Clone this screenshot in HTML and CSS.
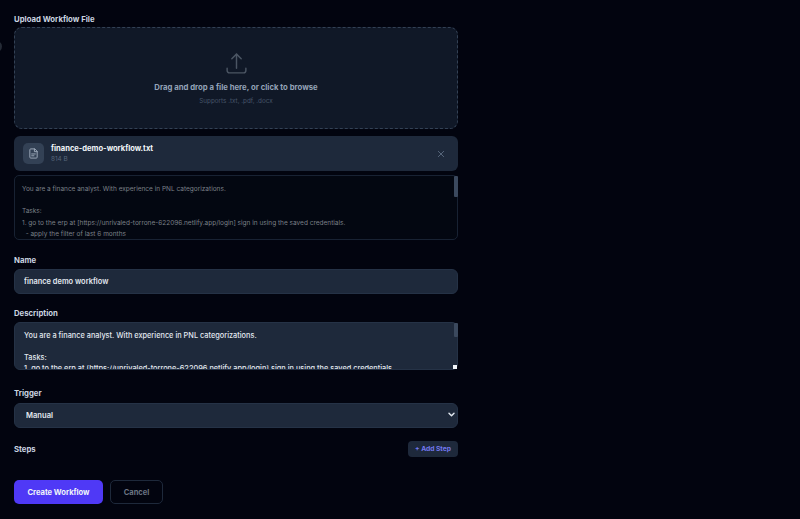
FILE: index.html
```html
<!DOCTYPE html>
<html lang="en">
<head>
<meta charset="utf-8">
<title>Create Workflow</title>
<link rel="stylesheet" href="styles.css">
</head>
<body>
<span class="edge-dot"></span>
<form class="form">
  <label class="label label-upload">Upload Workflow File</label>
  <div class="dropzone">
    <svg class="upload-icon" viewBox="0 0 24 24" fill="none" stroke="currentColor" stroke-width="1.4" stroke-linecap="round" stroke-linejoin="round"><path d="M3 16.5v2.25A2.25 2.25 0 0 0 5.25 21h13.5A2.25 2.25 0 0 0 21 18.75V16.5"/><path d="M7.5 7.5 12 3l4.5 4.5"/><path d="M12 3v13.5"/></svg>
    <div class="drop-title">Drag and drop a file here, or click to browse</div>
    <div class="drop-sub">Supports .txt, .pdf, .docx</div>
  </div>
  <div class="file-card">
    <div class="file-icon">
      <svg viewBox="0 0 24 24" fill="none" stroke="currentColor" stroke-width="2" stroke-linecap="round" stroke-linejoin="round"><path d="M14 2H6a2 2 0 0 0-2 2v16a2 2 0 0 0 2 2h12a2 2 0 0 0 2-2V8z"/><path d="M14 2v6h6"/><path d="M8 13h8"/><path d="M8 17h5"/></svg>
    </div>
    <div class="file-info">
      <div class="file-name">finance-demo-workflow.txt</div>
      <div class="file-size">814 B</div>
    </div>
    <svg class="file-close" viewBox="0 0 12 12" fill="none" stroke="currentColor" stroke-width="1.5" stroke-linecap="round"><path d="M2 2l8 8M10 2l-8 8"/></svg>
  </div>
  <div class="scroll-wrap">
    <div class="preview">You are a finance analyst. With experience in PNL categorizations.

Tasks:
1. go to the erp at [https://unrivaled-torrone-622096.netlify.app/login] sign in using the saved credentials.
  - apply the filter of last 6 months</div>
    <span class="thumb thumb-preview"></span>
  </div>

  <label class="label label-name">Name</label>
  <input class="input" type="text" value="finance demo workflow">

  <label class="label label-desc">Description</label>
  <div class="scroll-wrap">
    <textarea class="textarea">You are a finance analyst. With experience in PNL categorizations.

Tasks:
1. go to the erp at [https://unrivaled-torrone-622096.netlify.app/login] sign in using the saved credentials.</textarea>
    <span class="thumb thumb-desc"></span>
    <span class="resize-corner"></span>
  </div>

  <label class="label label-trigger">Trigger</label>
  <div class="select-wrap">
    <select class="select"><option>Manual</option></select>
    <svg class="select-chevron" viewBox="0 0 8 6" fill="none" stroke="currentColor" stroke-width="1.7" stroke-linecap="round" stroke-linejoin="round"><path d="M1 1.5 4 4.5 7 1.5"/></svg>
  </div>

  <div class="steps-row">
    <span class="label steps-label">Steps</span>
    <button type="button" class="add-step">+ Add Step</button>
  </div>

  <div class="actions">
    <button type="button" class="btn-primary">Create Workflow</button>
    <button type="button" class="btn-cancel">Cancel</button>
  </div>
</form>
</body>
</html>
```
FILE: styles.css
```css
* { box-sizing: border-box; }
html, body { margin: 0; height: 100%; overflow: hidden; }
body {
  background: #02040f;
  font-family: Inter, "Liberation Sans", sans-serif;
  color: #e2e8f0;
  position: relative;
}
.edge-dot {
  position: absolute;
  left: -9px;
  top: 41px;
  width: 11px;
  height: 11px;
  border-radius: 50%;
  background: #252b36;
}
.form {
  width: 444px;
  margin-left: 14px;
  padding-top: 14px;
  display: flex;
  flex-direction: column;
}
.label {
  display: block;
  font-size: 7.75px;
  line-height: 10px;
  font-weight: 700;
  color: #cbd5e1;
}
.label-upload { margin-bottom: 3px; }
.dropzone {
  height: 102px;
  border: 1px dashed #334155;
  border-radius: 8px;
  background: #101827;
  display: flex;
  flex-direction: column;
  align-items: center;
  padding-top: 23px;
}
.upload-icon { width: 25px; height: 25px; color: #4b5563; flex: none; }
.drop-title {
  margin-top: 6px;
  font-size: 7.75px;
  line-height: 11px;
  font-weight: 700;
  color: #94a3b8;
}
.drop-sub {
  margin-top: 3px;
  font-size: 6.3px;
  line-height: 10px;
  color: #475569;
}
.file-card {
  margin-top: 7px;
  height: 35px;
  border-radius: 6px;
  background: #1e293b;
  display: flex;
  align-items: center;
  padding: 0 13px 0 9px;
}
.file-icon {
  width: 21px;
  height: 21px;
  border-radius: 5px;
  background: #334155;
  color: #a3afbf;
  display: flex;
  align-items: center;
  justify-content: center;
  flex: none;
}
.file-icon svg { width: 11px; height: 11px; }
.file-info { margin-left: 7px; flex: 1; }
.file-name {
  font-size: 7.55px;
  line-height: 11px;
  font-weight: 700;
  color: #f1f5f9;
}
.file-size {
  margin-top: 1px;
  font-size: 6.4px;
  line-height: 9px;
  color: #56657a;
}
.file-close { width: 8px; height: 8px; color: #56657a; flex: none; }
.scroll-wrap { position: relative; }
.file-card + .scroll-wrap { margin-top: 4px; }
.preview {
  height: 65px;
  border: 1px solid #182233;
  border-radius: 5px;
  background: #030711;
  padding: 8px 7px 0;
  font-size: 6.5px;
  line-height: 11.2px;
  color: #7b8088;
  white-space: pre-wrap;
  overflow: hidden;
}
.thumb {
  position: absolute;
  right: 0;
  top: 1px;
  width: 4px;
  background: #3b495e;
  border-radius: 1px;
}
.thumb-preview { height: 21px; }
.thumb-desc { height: 14px; }
.resize-corner {
  position: absolute;
  right: 1px;
  bottom: 1px;
  width: 4px;
  height: 4px;
  background: #f1f5f9;
}
.label-name { margin-top: 15px; margin-bottom: 4px; }
.input {
  height: 25px;
  border: 1px solid #253246;
  border-radius: 6px;
  background: #1e293b;
  padding: 0 9px;
  font: 600 7.45px Inter, "Liberation Sans", sans-serif;
  color: #e2e8f0;
  outline: none;
}
.label-desc { margin-top: 14px; margin-bottom: 4px; }
.textarea {
  display: block;
  width: 100%;
  height: 48px;
  border: 1px solid #253246;
  border-radius: 6px;
  background: #1e293b;
  padding: 6.5px 9px 0;
  font: 500 7.35px/11.3px Inter, "Liberation Sans", sans-serif;
  color: #e2e8f0;
  outline: none;
  resize: none;
  overflow: hidden;
}
.label-trigger { margin-top: 18px; margin-bottom: 4px; }
.select-wrap { position: relative; height: 25px; }
.select {
  appearance: none;
  width: 100%;
  height: 25px;
  border: 1px solid #253246;
  border-radius: 6px;
  background: #1e293b;
  padding: 0 11px;
  font: 600 7.6px Inter, "Liberation Sans", sans-serif;
  color: #e2e8f0;
  outline: none;
}
.select-chevron {
  position: absolute;
  right: 3px;
  top: 10px;
  width: 7px;
  height: 5px;
  color: #e2e8f0;
  pointer-events: none;
}
.steps-row {
  margin-top: 14px;
  height: 16px;
  display: flex;
  align-items: center;
  justify-content: space-between;
}
.add-step {
  height: 16px;
  width: 50px;
  border: 0;
  border-radius: 4px;
  padding: 0;
  background: #1e293b;
  color: #757af2;
  font: 700 6.7px Inter, "Liberation Sans", sans-serif;
}
.actions {
  margin-top: 23px;
  display: flex;
  gap: 7px;
}
.btn-primary {
  width: 89px;
  height: 24px;
  border: 0;
  border-radius: 5px;
  padding: 0;
  background: #4f39f6;
  color: #f1f5f9;
  font: 700 7.55px Inter, "Liberation Sans", sans-serif;
}
.btn-cancel {
  width: 53px;
  height: 24px;
  border: 1px solid #1e293b;
  border-radius: 5px;
  padding: 0;
  background: transparent;
  color: #6b7583;
  font: 700 7.5px Inter, "Liberation Sans", sans-serif;
}
```
